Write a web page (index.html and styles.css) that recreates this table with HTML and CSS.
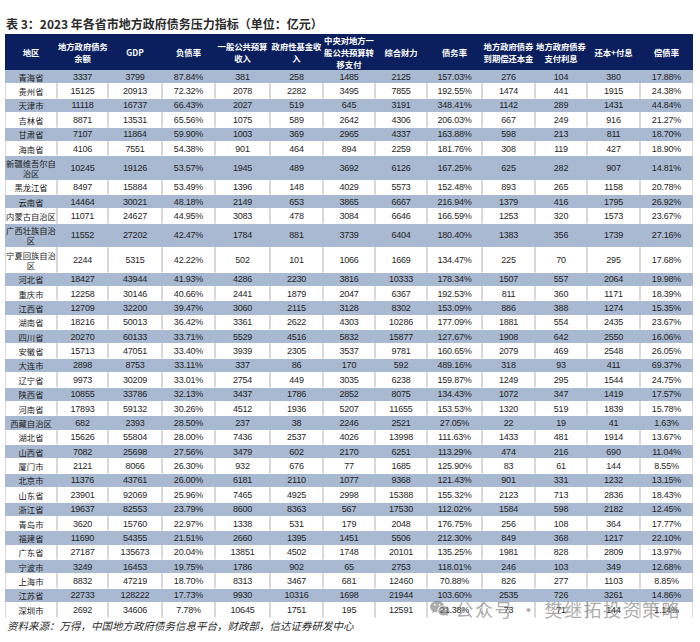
FILE: index.html
```html
<!DOCTYPE html>
<html lang="zh-CN">
<head>
<meta charset="utf-8">
<title>2023年各省市地方政府债务压力指标</title>
<link rel="stylesheet" href="styles.css">
</head>
<body>
<div class="page">
  <h1 class="title">表 3：2023 年各省市地方政府债务压力指标（单位：亿元）</h1>
  <div class="table-wrap">
    <table class="debt">
      <colgroup>
        <col class="w52"><col class="w51"><col class="w54"><col class="w53"><col class="w55"><col class="w53"><col class="w52">
        <col class="w52"><col class="w55"><col class="w53"><col class="w52"><col class="w53"><col class="w53">
      </colgroup>
      <thead>
        <tr>
          <th>地区</th>
          <th>地方政府债务<br>余额</th>
          <th>GDP</th>
          <th>负债率</th>
          <th>一般公共预算<br>收入</th>
          <th>政府性基金收<br>入</th>
          <th>中央对地方一<br>般公共预算转<br>移支付</th>
          <th>综合财力</th>
          <th>债务率</th>
          <th>地方政府债券<br>到期偿还本金</th>
          <th>地方政府债券<br>支付利息</th>
          <th>还本+付息</th>
          <th>偿债率</th>
        </tr>
      </thead>
      <tbody>
        <tr><td class="region">青海省</td><td>3337</td><td>3799</td><td>87.84%</td><td>381</td><td>258</td><td>1485</td><td>2125</td><td>157.03%</td><td>276</td><td>104</td><td>380</td><td>17.88%</td></tr>
        <tr><td class="region">贵州省</td><td>15125</td><td>20913</td><td>72.32%</td><td>2078</td><td>2282</td><td>3495</td><td>7855</td><td>192.55%</td><td>1474</td><td>441</td><td>1915</td><td>24.38%</td></tr>
        <tr><td class="region">天津市</td><td>11118</td><td>16737</td><td>66.43%</td><td>2027</td><td>519</td><td>645</td><td>3191</td><td>348.41%</td><td>1142</td><td>289</td><td>1431</td><td>44.84%</td></tr>
        <tr><td class="region">吉林省</td><td>8871</td><td>13531</td><td>65.56%</td><td>1075</td><td>589</td><td>2642</td><td>4306</td><td>206.03%</td><td>667</td><td>249</td><td>916</td><td>21.27%</td></tr>
        <tr><td class="region">甘肃省</td><td>7107</td><td>11864</td><td>59.90%</td><td>1003</td><td>369</td><td>2965</td><td>4337</td><td>163.88%</td><td>598</td><td>213</td><td>811</td><td>18.70%</td></tr>
        <tr><td class="region">海南省</td><td>4106</td><td>7551</td><td>54.38%</td><td>901</td><td>464</td><td>894</td><td>2259</td><td>181.76%</td><td>308</td><td>119</td><td>427</td><td>18.90%</td></tr>
        <tr><td class="region">新疆维吾尔自<br>治区</td><td>10245</td><td>19126</td><td>53.57%</td><td>1945</td><td>489</td><td>3692</td><td>6126</td><td>167.25%</td><td>625</td><td>282</td><td>907</td><td>14.81%</td></tr>
        <tr><td class="region">黑龙江省</td><td>8497</td><td>15884</td><td>53.49%</td><td>1396</td><td>148</td><td>4029</td><td>5573</td><td>152.48%</td><td>893</td><td>265</td><td>1158</td><td>20.78%</td></tr>
        <tr><td class="region">云南省</td><td>14464</td><td>30021</td><td>48.18%</td><td>2149</td><td>653</td><td>3865</td><td>6667</td><td>216.94%</td><td>1379</td><td>416</td><td>1795</td><td>26.92%</td></tr>
        <tr><td class="region">内蒙古自治区</td><td>11071</td><td>24627</td><td>44.95%</td><td>3083</td><td>478</td><td>3084</td><td>6646</td><td>166.59%</td><td>1253</td><td>320</td><td>1573</td><td>23.67%</td></tr>
        <tr><td class="region">广西壮族自治<br>区</td><td>11552</td><td>27202</td><td>42.47%</td><td>1784</td><td>881</td><td>3739</td><td>6404</td><td>180.40%</td><td>1383</td><td>356</td><td>1739</td><td>27.16%</td></tr>
        <tr><td class="region">宁夏回族自治<br>区</td><td>2244</td><td>5315</td><td>42.22%</td><td>502</td><td>101</td><td>1066</td><td>1669</td><td>134.47%</td><td>225</td><td>70</td><td>295</td><td>17.68%</td></tr>
        <tr><td class="region">河北省</td><td>18427</td><td>43944</td><td>41.93%</td><td>4286</td><td>2230</td><td>3816</td><td>10333</td><td>178.34%</td><td>1507</td><td>557</td><td>2064</td><td>19.98%</td></tr>
        <tr><td class="region">重庆市</td><td>12258</td><td>30146</td><td>40.66%</td><td>2441</td><td>1879</td><td>2047</td><td>6367</td><td>192.53%</td><td>811</td><td>360</td><td>1171</td><td>18.39%</td></tr>
        <tr><td class="region">江西省</td><td>12709</td><td>32200</td><td>39.47%</td><td>3060</td><td>2115</td><td>3128</td><td>8302</td><td>153.09%</td><td>886</td><td>388</td><td>1274</td><td>15.35%</td></tr>
        <tr><td class="region">湖南省</td><td>18216</td><td>50013</td><td>36.42%</td><td>3361</td><td>2622</td><td>4303</td><td>10286</td><td>177.09%</td><td>1881</td><td>554</td><td>2435</td><td>23.67%</td></tr>
        <tr><td class="region">四川省</td><td>20270</td><td>60133</td><td>33.71%</td><td>5529</td><td>4516</td><td>5832</td><td>15877</td><td>127.67%</td><td>1908</td><td>642</td><td>2550</td><td>16.06%</td></tr>
        <tr><td class="region">安徽省</td><td>15713</td><td>47051</td><td>33.40%</td><td>3939</td><td>2305</td><td>3537</td><td>9781</td><td>160.65%</td><td>2079</td><td>469</td><td>2548</td><td>26.05%</td></tr>
        <tr><td class="region">大连市</td><td>2898</td><td>8753</td><td>33.11%</td><td>337</td><td>86</td><td>170</td><td>592</td><td>489.16%</td><td>318</td><td>93</td><td>411</td><td>69.37%</td></tr>
        <tr><td class="region">辽宁省</td><td>9973</td><td>30209</td><td>33.01%</td><td>2754</td><td>449</td><td>3035</td><td>6238</td><td>159.87%</td><td>1249</td><td>295</td><td>1544</td><td>24.75%</td></tr>
        <tr><td class="region">陕西省</td><td>10855</td><td>33786</td><td>32.13%</td><td>3437</td><td>1786</td><td>2852</td><td>8075</td><td>134.43%</td><td>1072</td><td>347</td><td>1419</td><td>17.57%</td></tr>
        <tr><td class="region">河南省</td><td>17893</td><td>59132</td><td>30.26%</td><td>4512</td><td>1936</td><td>5207</td><td>11655</td><td>153.53%</td><td>1320</td><td>519</td><td>1839</td><td>15.78%</td></tr>
        <tr><td class="region">西藏自治区</td><td>682</td><td>2393</td><td>28.50%</td><td>237</td><td>38</td><td>2246</td><td>2521</td><td>27.05%</td><td>22</td><td>19</td><td>41</td><td>1.63%</td></tr>
        <tr><td class="region">湖北省</td><td>15626</td><td>55804</td><td>28.00%</td><td>7436</td><td>2537</td><td>4026</td><td>13998</td><td>111.63%</td><td>1433</td><td>481</td><td>1914</td><td>13.67%</td></tr>
        <tr><td class="region">山西省</td><td>7082</td><td>25698</td><td>27.56%</td><td>3479</td><td>602</td><td>2170</td><td>6251</td><td>113.29%</td><td>474</td><td>216</td><td>690</td><td>11.04%</td></tr>
        <tr><td class="region">厦门市</td><td>2121</td><td>8066</td><td>26.30%</td><td>932</td><td>676</td><td>77</td><td>1685</td><td>125.90%</td><td>83</td><td>61</td><td>144</td><td>8.55%</td></tr>
        <tr><td class="region">北京市</td><td>11376</td><td>43761</td><td>26.00%</td><td>6181</td><td>2110</td><td>1077</td><td>9368</td><td>121.43%</td><td>901</td><td>331</td><td>1232</td><td>13.15%</td></tr>
        <tr><td class="region">山东省</td><td>23901</td><td>92069</td><td>25.96%</td><td>7465</td><td>4925</td><td>2998</td><td>15388</td><td>155.32%</td><td>2123</td><td>713</td><td>2836</td><td>18.43%</td></tr>
        <tr><td class="region">浙江省</td><td>19637</td><td>82553</td><td>23.79%</td><td>8600</td><td>8363</td><td>567</td><td>17530</td><td>112.02%</td><td>1584</td><td>598</td><td>2182</td><td>12.45%</td></tr>
        <tr><td class="region">青岛市</td><td>3620</td><td>15760</td><td>22.97%</td><td>1338</td><td>531</td><td>179</td><td>2048</td><td>176.75%</td><td>256</td><td>108</td><td>364</td><td>17.77%</td></tr>
        <tr><td class="region">福建省</td><td>11690</td><td>54355</td><td>21.51%</td><td>2660</td><td>1395</td><td>1451</td><td>5506</td><td>212.30%</td><td>849</td><td>368</td><td>1217</td><td>22.10%</td></tr>
        <tr><td class="region">广东省</td><td>27187</td><td>135673</td><td>20.04%</td><td>13851</td><td>4502</td><td>1748</td><td>20101</td><td>135.25%</td><td>1981</td><td>828</td><td>2809</td><td>13.97%</td></tr>
        <tr><td class="region">宁波市</td><td>3249</td><td>16453</td><td>19.75%</td><td>1786</td><td>902</td><td>65</td><td>2753</td><td>118.01%</td><td>246</td><td>103</td><td>349</td><td>12.68%</td></tr>
        <tr><td class="region">上海市</td><td>8832</td><td>47219</td><td>18.70%</td><td>8313</td><td>3467</td><td>681</td><td>12460</td><td>70.88%</td><td>826</td><td>277</td><td>1103</td><td>8.85%</td></tr>
        <tr><td class="region">江苏省</td><td>22733</td><td>128222</td><td>17.73%</td><td>9930</td><td>10316</td><td>1698</td><td>21944</td><td>103.60%</td><td>2535</td><td>726</td><td>3261</td><td>14.86%</td></tr>
        <tr><td class="region">深圳市</td><td>2692</td><td>34606</td><td>7.78%</td><td>10645</td><td>1751</td><td>195</td><td>12591</td><td>21.38%</td><td>73</td><td>71</td><td>144</td><td>1.14%</td></tr>
      </tbody>
    </table>
    <div class="watermark">
      <svg class="wm-icon" viewBox="0 0 24 20" width="22" height="18" aria-hidden="true">
        <path d="M9 1C4.6 1 1 3.9 1 7.5c0 2 1.1 3.8 2.9 5l-.7 2.3 2.7-1.4c1 .3 2 .5 3.1.5h.5C9.2 13.3 9 12.7 9 12c0-3.4 3.3-6 7.3-6h.5C16 3.1 12.9 1 9 1z" fill="currentColor"/>
        <path d="M16.3 7C12.8 7 10 9.3 10 12.1s2.8 5.1 6.3 5.1c.8 0 1.6-.1 2.3-.4l2.2 1.1-.6-1.9c1.5-.9 2.4-2.4 2.4-3.9C22.6 9.3 19.8 7 16.3 7z" fill="currentColor"/>
        <circle cx="6.2" cy="5.4" r="1" fill="#fff"/>
        <circle cx="11.4" cy="5.4" r="1" fill="#fff"/>
        <circle cx="14.2" cy="10.6" r=".8" fill="#fff"/>
        <circle cx="18.4" cy="10.6" r=".8" fill="#fff"/>
      </svg>
      <span class="wm-text">公众号 · 樊继拓投资策略</span>
    </div>
  </div>
  <p class="source">资料来源：万得，中国地方政府债务信息平台，财政部，信达证券研发中心</p>
</div>
</body>
</html>
```

FILE: styles.css
```css
body {
  margin: 0;
  background: #ffffff;
  font-family: "Liberation Sans", "Noto Sans CJK SC", sans-serif;
}

.page {
  width: 688px;
  padding: 16px 0 0 5px;
}

.title {
  margin: 0 0 2px 1px;
  font-family: "Noto Sans CJK SC", sans-serif;
  font-weight: 700;
  font-size: 12px;
  line-height: 16px;
  color: #2b2b2b;
}

.table-wrap {
  position: relative;
}

.debt {
  width: 688px;
  table-layout: fixed;
  border-collapse: separate;
  border-spacing: 0;
}

.w51 { width: 51px; }
.w52 { width: 52px; }
.w53 { width: 53px; }
.w54 { width: 54px; }
.w55 { width: 55px; }

.debt th {
  height: 36px;
  padding: 0;
  background: #0b1f5e;
  color: #ffffff;
  font-family: "Noto Sans CJK SC", sans-serif;
  font-weight: 700;
  font-size: 8.3px;
  line-height: 12px;
  text-align: center;
  vertical-align: middle;
  white-space: nowrap;
  border-left: 1px solid #0b1f5e;
  border-right: 1px solid #0b1f5e;
}

.debt td {
  padding: 1.7px 0;
  font-size: 9px;
  line-height: 10px;
  letter-spacing: -0.2px;
  color: #1f1f1f;
  text-align: center;
  vertical-align: middle;
  white-space: nowrap;
  background: #ffffff;
  border-left: 1px solid #d8d8d8;
  border-right: 1px solid #d8d8d8;
  border-bottom: 1px solid #ffffff;
}

.debt tbody tr:nth-child(odd) td {
  background: #a9b9d1;
  border-left-color: #a9b9d1;
  border-right-color: #a9b9d1;
}

.debt td.region {
  font-family: "Noto Sans CJK SC", sans-serif;
  font-size: 8.3px;
  letter-spacing: 0;
  color: #1a1a1a;
}

.watermark {
  position: absolute;
  right: 12px;
  bottom: -2px;
  display: flex;
  align-items: center;
  gap: 4px;
  color: #767676;
  opacity: 0.6;
  pointer-events: none;
}

.wm-icon {
  display: block;
  flex: none;
}

.wm-text {
  font-family: "Noto Sans CJK SC", sans-serif;
  font-size: 18px;
  line-height: 22px;
  letter-spacing: 1.5px;
  white-space: nowrap;
}

.source {
  margin: 1px 0 0 2px;
  font-family: "Noto Sans CJK SC", sans-serif;
  font-style: italic;
  font-size: 10.5px;
  line-height: 14px;
  color: #2a2a2a;
}
```
